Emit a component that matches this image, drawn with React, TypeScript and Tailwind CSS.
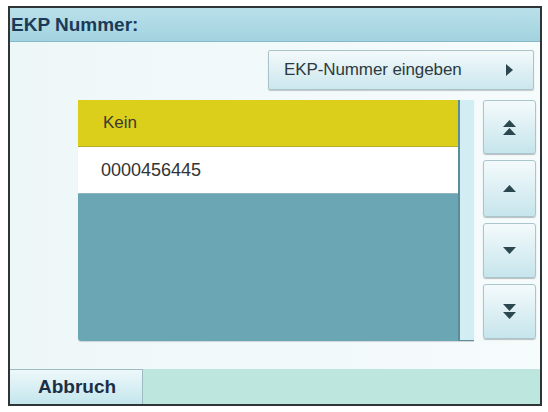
import React from "react";

const font = { fontFamily: '"Liberation Sans", Arial, sans-serif' };

function Arrows({ dir, double }: { dir: "up" | "down"; double?: boolean }) {
  const tri = (y: number) =>
    dir === "up" ? `M6.5 ${y} L13 ${y + 7} L0 ${y + 7} Z` : `M0 ${y} L13 ${y} L6.5 ${y + 7} Z`;
  return (
    <svg width="13" height={double ? 15 : 7} viewBox={`0 0 13 ${double ? 15 : 7}`}>
      <path d={tri(0)} fill="#2b4750" />
      {double && <path d={tri(8)} fill="#2b4750" />}
    </svg>
  );
}

function ScrollButton({ children, className }: { children: React.ReactNode; className?: string }) {
  return (
    <button
      type="button"
      className={`w-[53px] flex items-center justify-center rounded-[3px] border border-[#a9c6cd] bg-gradient-to-b from-[#f4fafc] to-[#c6e5ec] shadow-[0_1px_1px_rgba(0,0,0,0.25)] ${className ?? ""}`}
    >
      {children}
    </button>
  );
}

export default function App() {
  return (
    <div className="w-[548px] h-[412px] bg-white pt-[6px] pl-[8px]" style={font}>
      <div className="w-[534px] h-[400px] border-2 border-[#2f3536] flex flex-col overflow-hidden">
        <header className="h-[34px] flex items-center pl-px border-b border-[#86b9c6] bg-gradient-to-b from-[#b9e0ea] to-[#a2d3df]">
          <span className="text-[19px] font-bold text-[#1b3a58] leading-none">EKP Nummer:</span>
        </header>

        <main className="flex-1 flex flex-col bg-gradient-to-r from-[#eef7f8] to-[#f6fbfc] pt-2">
          <button
            type="button"
            className="self-end mr-[6px] w-[266px] h-[40px] flex items-center justify-between pl-[15px] pr-[20px] border border-[#a9c3c9] rounded-[2px] bg-gradient-to-b from-[#f3f9fb] to-[#cbe7ee] shadow-[0_1px_1px_rgba(0,0,0,0.2)]"
          >
            <span className="text-[17px] text-[#2d3a3e] tracking-[-0.1px]">EKP-Nummer eingeben</span>
            <svg width="7" height="12" viewBox="0 0 7 12">
              <path d="M0 0 L7 6 L0 12 Z" fill="#2b4750" />
            </svg>
          </button>

          <div className="flex mt-[10px] pl-[68px] gap-[9px]">
            <div className="w-[396px] h-[241px] flex rounded-bl-[3px] overflow-hidden shadow-[0_1px_1px_rgba(0,0,0,0.15)]">
              <div className="flex-1 flex flex-col bg-[#6aa6b4]">
                <div className="h-[47px] flex items-center pl-[25px] bg-[#dccf1c] border-b border-[#b7ad2a] text-[17px] text-[#3a3a30]">
                  Kein
                </div>
                <div className="h-[47px] flex items-center pl-[23px] bg-white border-b border-[#8fb5bf] text-[18px] text-[#333]">
                  0000456445
                </div>
              </div>
              <div className="w-[16px] bg-[#d3edf5] border-l-2 border-[#5b8c99] border-b border-b-[#5b8c99]" />
            </div>

            <div className="flex flex-col gap-[6px]">
              <ScrollButton className="h-[54px]">
                <Arrows dir="up" double />
              </ScrollButton>
              <ScrollButton className="h-[57px]">
                <Arrows dir="up" />
              </ScrollButton>
              <ScrollButton className="h-[55px]">
                <Arrows dir="down" />
              </ScrollButton>
              <ScrollButton className="h-[55px]">
                <Arrows dir="down" double />
              </ScrollButton>
            </div>
          </div>
        </main>

        <footer className="h-[35px] flex bg-[#bde7de]">
          <button
            type="button"
            className="w-[133px] h-full flex items-center pl-[28px] border-t border-r border-[#9cbcc2] bg-gradient-to-b from-[#eef8fa] to-[#c3e6ed]"
          >
            <span className="text-[19px] font-bold text-[#1c2f45]">Abbruch</span>
          </button>
        </footer>
      </div>
    </div>
  );
}
